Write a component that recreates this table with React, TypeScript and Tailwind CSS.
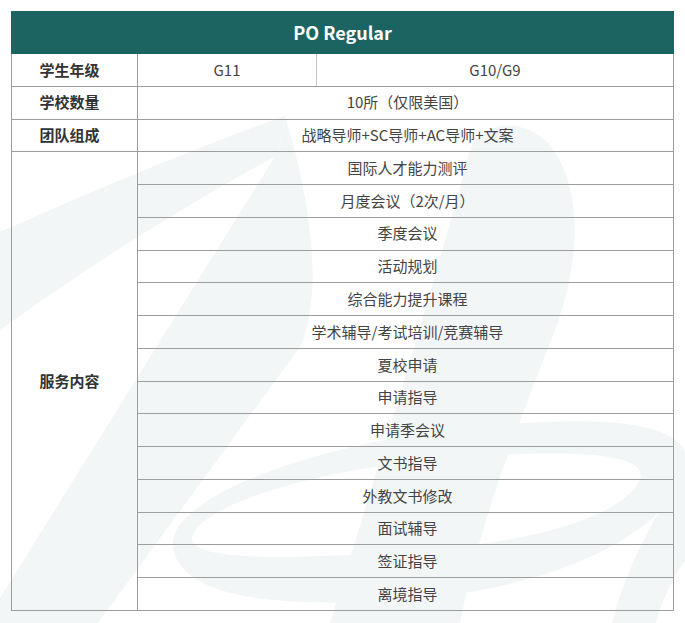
import React from "react";

const services = [
  "国际人才能力测评",
  "月度会议（2次/月）",
  "季度会议",
  "活动规划",
  "综合能力提升课程",
  "学术辅导/考试培训/竞赛辅导",
  "夏校申请",
  "申请指导",
  "申请季会议",
  "文书指导",
  "外教文书修改",
  "面试辅导",
  "签证指导",
  "离境指导",
];

function Watermark() {
  return (
    <svg
      className="absolute inset-0 pointer-events-none"
      width="685"
      height="623"
      viewBox="0 0 685 623"
    >
      <g fill="#f3f6f7">
        <path d="M0,232 C95,190 190,150 285,116 L278,155 C185,205 95,262 0,330 Z" />
        <path d="M279,150 L0,598 L0,623 L98,623 L300,347 C322,300 314,210 285,116 Z" />
        <path d="M330,623 L460,623 C480,520 520,420 555,330 C585,250 580,175 545,140 C515,115 480,125 470,150 C430,300 380,460 330,623 Z" />
        <path
          fillRule="evenodd"
          d="M173,545 C170,500 300,448 450,430 C600,412 700,420 685,470 C670,530 560,590 400,600 C250,610 176,590 173,545 Z M192,537 C200,505 320,468 450,458 C560,450 650,450 640,480 C620,520 520,545 400,552 C280,560 188,560 192,537 Z"
        />
        <path d="M612,623 C625,572 650,522 685,470 L685,560 C672,580 662,600 656,623 Z" />
      </g>
    </svg>
  );
}

export default function App() {
  const border = "border-[#9d9d9d]";
  return (
    <div className="relative w-[685px] h-[623px] bg-white overflow-hidden font-['Noto_Sans_CJK_SC','Noto_Sans',sans-serif]">
      <Watermark />
      <div className="relative pl-[11px] pt-[11px]">
        <div className="w-[663px]">
          <div className="h-[43px] bg-[#1c6461] flex items-center justify-center text-white text-[18px] font-bold">
            PO Regular
          </div>
          <div
            className={`grid grid-cols-[126px_1fr] grid-rows-[repeat(17,minmax(0,1fr))] h-[557px] border-l border-r ${border}`}
          >
            <div className={`flex items-center justify-center pr-[10px] border-r border-b ${border} text-[15px] font-bold text-[#333]`}>
              学生年级
            </div>
            <div className={`grid grid-cols-[179px_1fr] border-b ${border} text-[15px] text-[#444]`}>
              <div className="flex items-center justify-center border-r border-[#c4c4c4]">G11</div>
              <div className="flex items-center justify-center">G10/G9</div>
            </div>
            <div className={`flex items-center justify-center pr-[10px] border-r border-b ${border} text-[15px] font-bold text-[#333]`}>
              学校数量
            </div>
            <div className={`flex items-center justify-center pl-[4px] border-b ${border} text-[15px] text-[#444]`}>
              10所（仅限美国）
            </div>
            <div className={`flex items-center justify-center pr-[10px] border-r border-b ${border} text-[15px] font-bold text-[#333]`}>
              团队组成
            </div>
            <div className={`flex items-center justify-center pl-[4px] border-b ${border} text-[15px] text-[#444]`}>
              战略导师+SC导师+AC导师+文案
            </div>
            <div
              className={`row-span-14 flex items-center justify-center pr-[10px] border-r border-b ${border} text-[15px] font-bold text-[#333]`}
            >
              服务内容
            </div>
            {services.map((s) => (
              <div
                key={s}
                className={`col-start-2 flex items-center justify-center pl-[4px] border-b ${border} text-[15px] text-[#444]`}
              >
                {s}
              </div>
            ))}
          </div>
        </div>
      </div>
    </div>
  );
}
